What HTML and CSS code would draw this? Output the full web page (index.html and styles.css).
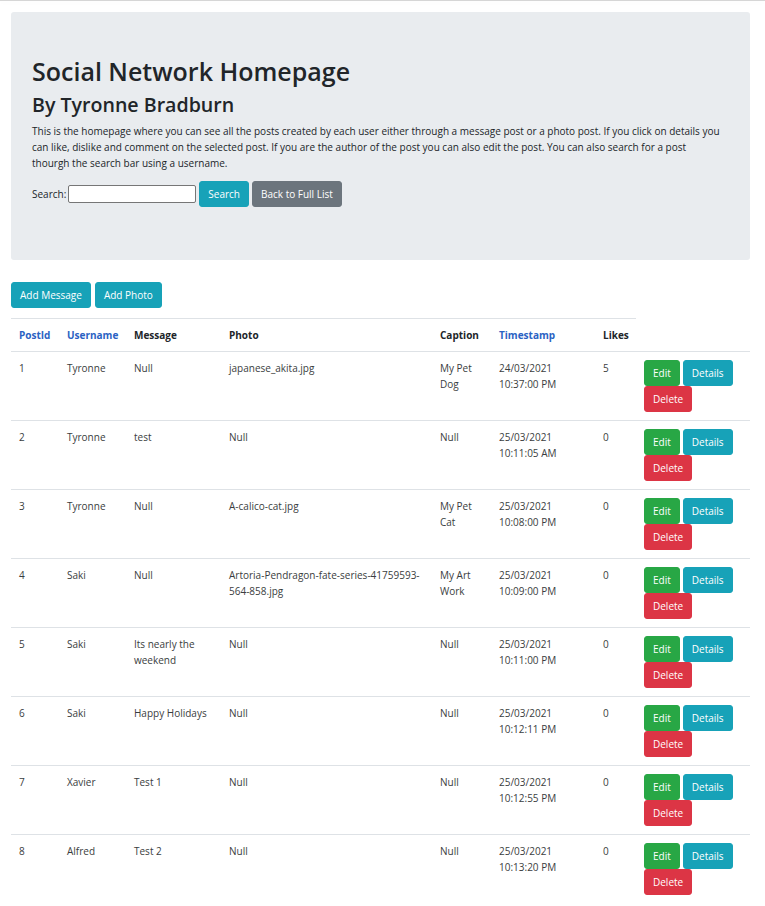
FILE: index.html
```html
<!DOCTYPE html>
<html lang="en">
<head>
<meta charset="utf-8">
<title>Social Network Homepage</title>
<link rel="stylesheet" href="styles.css">
</head>
<body>
<div class="topbar"></div>
<div class="page">
  <div class="jumbotron">
    <h1 class="title">Social Network Homepage</h1>
    <h2 class="subtitle">By Tyronne Bradburn</h2>
    <p class="lead-text">This is the homepage where you can see all the posts created by each user either through a message post or a photo post. If you click on details you can like, dislike and comment on the selected post. If you are the author of the post you can also edit the post. You can also search for a post thourgh the search bar using a username.</p>
    <form class="search">
      <label class="search-label">Search:</label>
      <input class="search-input" type="text">
      <button type="button" class="btn btn-info">Search</button>
      <a class="btn btn-secondary">Back to Full List</a>
    </form>
  </div>

  <div class="toolbar">
    <a class="btn btn-info">Add Message</a>
    <a class="btn btn-info">Add Photo</a>
  </div>

  <table class="posts">
    <colgroup>
      <col class="c-id"><col class="c-user"><col class="c-msg"><col class="c-photo"><col class="c-cap"><col class="c-time"><col class="c-likes"><col class="c-act">
    </colgroup>
    <thead>
      <tr>
        <th class="sort">PostId</th>
        <th class="sort">Username</th>
        <th>Message</th>
        <th>Photo</th>
        <th>Caption</th>
        <th class="sort">Timestamp</th>
        <th>Likes</th>
      </tr>
    </thead>
    <tbody>
      <tr>
        <td>1</td><td>Tyronne</td><td>Null</td><td>japanese_akita.jpg</td><td>My Pet Dog</td><td>24/03/2021 10:37:00 PM</td><td>5</td>
        <td><div class="acts"><a class="btn btn-success">Edit</a><a class="btn btn-info">Details</a><a class="btn btn-danger">Delete</a></div></td>
      </tr>
      <tr>
        <td>2</td><td>Tyronne</td><td>test</td><td>Null</td><td>Null</td><td>25/03/2021 10:11:05 AM</td><td>0</td>
        <td><div class="acts"><a class="btn btn-success">Edit</a><a class="btn btn-info">Details</a><a class="btn btn-danger">Delete</a></div></td>
      </tr>
      <tr>
        <td>3</td><td>Tyronne</td><td>Null</td><td>A-calico-cat.jpg</td><td>My Pet Cat</td><td>25/03/2021 10:08:00 PM</td><td>0</td>
        <td><div class="acts"><a class="btn btn-success">Edit</a><a class="btn btn-info">Details</a><a class="btn btn-danger">Delete</a></div></td>
      </tr>
      <tr>
        <td>4</td><td>Saki</td><td>Null</td><td>Artoria-Pendragon-fate-series-41759593-564-858.jpg</td><td>My Art Work</td><td>25/03/2021 10:09:00 PM</td><td>0</td>
        <td><div class="acts"><a class="btn btn-success">Edit</a><a class="btn btn-info">Details</a><a class="btn btn-danger">Delete</a></div></td>
      </tr>
      <tr>
        <td>5</td><td>Saki</td><td>Its nearly the weekend</td><td>Null</td><td>Null</td><td>25/03/2021 10:11:00 PM</td><td>0</td>
        <td><div class="acts"><a class="btn btn-success">Edit</a><a class="btn btn-info">Details</a><a class="btn btn-danger">Delete</a></div></td>
      </tr>
      <tr>
        <td>6</td><td>Saki</td><td>Happy Holidays</td><td>Null</td><td>Null</td><td>25/03/2021 10:12:11 PM</td><td>0</td>
        <td><div class="acts"><a class="btn btn-success">Edit</a><a class="btn btn-info">Details</a><a class="btn btn-danger">Delete</a></div></td>
      </tr>
      <tr>
        <td>7</td><td>Xavier</td><td>Test 1</td><td>Null</td><td>Null</td><td>25/03/2021 10:12:55 PM</td><td>0</td>
        <td><div class="acts"><a class="btn btn-success">Edit</a><a class="btn btn-info">Details</a><a class="btn btn-danger">Delete</a></div></td>
      </tr>
      <tr>
        <td>8</td><td>Alfred</td><td>Test 2</td><td>Null</td><td>Null</td><td>25/03/2021 10:13:20 PM</td><td>0</td>
        <td><div class="acts"><a class="btn btn-success">Edit</a><a class="btn btn-info">Details</a><a class="btn btn-danger">Delete</a></div></td>
      </tr>
    </tbody>
  </table>
</div>
</body>
</html>
```

FILE: styles.css
```css
html, body {
  margin: 0;
  padding: 0;
}
body {
  font-family: "Open Sans", "Noto Sans", sans-serif;
  font-size: 10px;
  line-height: 16px;
  color: #212529;
  background: #fff;
}
.topbar {
  height: 1px;
  background: #d6d6d6;
  box-shadow: 0 1px 6px rgba(0,0,0,0.06);
}
.page {
  padding: 11px 15px 0 11px;
}
.jumbotron {
  background: #e9ecef;
  border-radius: 3px;
  padding: 43px 21px 42px 21px;
  margin-bottom: 21px;
}
.title {
  margin: 0 0 5px 0;
  font-size: 25px;
  line-height: 32px;
  font-weight: 600;
}
.subtitle {
  margin: 0 0 5px 0;
  font-size: 19.6px;
  line-height: 26px;
  font-weight: 600;
}
.lead-text {
  margin: 0 0 10px 0;
  padding-right: 6px;
}
.search {
  display: flex;
  align-items: center;
  gap: 3px;
  margin: 0 0 11px 0;
}
.search-label {
  margin-right: -1px;
}
.search-input {
  width: 122px;
  height: 14px;
  padding: 1px 2px;
  border: 1px solid #767676;
  border-radius: 2px;
  background: #fff;
  font: inherit;
}
.btn {
  display: inline-block;
  box-sizing: border-box;
  height: 26px;
  padding: 4px 8px;
  border: 1px solid transparent;
  border-radius: 3px;
  font-family: inherit;
  font-size: 10px;
  line-height: 16px;
  color: #fff;
  text-decoration: none;
  white-space: nowrap;
  cursor: pointer;
}
.btn-info { background: #17a2b8; border-color: #17a2b8; }
.btn-secondary { background: #6c757d; border-color: #6c757d; }
.btn-success { background: #28a745; border-color: #28a745; }
.btn-danger { background: #dc3545; border-color: #dc3545; }

.toolbar {
  display: flex;
  gap: 4px;
  padding-top: 1px;
  margin-bottom: 10px;
}
.posts {
  width: 739px;
  border-collapse: collapse;
  table-layout: fixed;
}
.c-id { width: 48px; }
.c-user { width: 67px; }
.c-msg { width: 95px; }
.c-photo { width: 211px; }
.c-cap { width: 59px; }
.c-time { width: 104px; }
.c-likes { width: 41px; }
.c-act { width: 114px; }
.posts th, .posts td {
  padding: 8px;
  vertical-align: top;
  text-align: left;
  border-top: 1px solid #dee2e6;
}
.posts th {
  font-weight: 700;
  color: #212529;
}
.posts th.sort {
  color: #2a62c3;
}
.posts td {
  color: #3a3d40;
}
.acts {
  display: flex;
  flex-wrap: wrap;
  column-gap: 3px;
  width: 98px;
}
```
